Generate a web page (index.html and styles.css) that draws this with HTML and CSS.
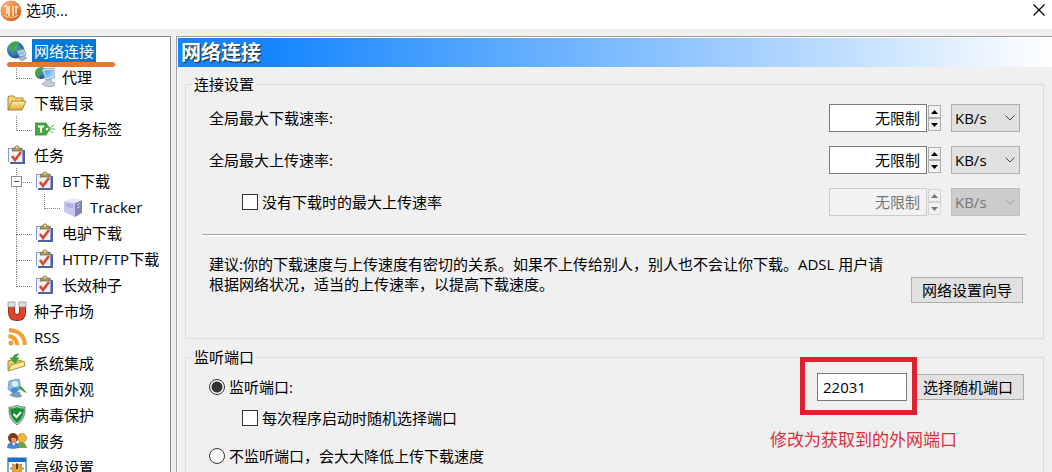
FILE: index.html
```html
<!DOCTYPE html>
<html lang="zh-CN">
<head>
  <meta charset="UTF-8">
  <meta name="viewport" content="width=device-width,initial-scale=1.0">
  <title>选项</title>
  <link rel="stylesheet" href="styles.css">
</head>
<body>
  <svg class="defs" aria-hidden="true">
    <defs>
      <linearGradient id="orange" x1="0" y1="0" x2="1" y2="1">
        <stop offset="0" stop-color="#ffc48a"/><stop offset="0.5" stop-color="#ee8838"/><stop offset="1" stop-color="#c9501a"/>
      </linearGradient>
      <radialGradient id="globe" cx="0.35" cy="0.3" r="0.8">
        <stop offset="0" stop-color="#5fb4ee"/><stop offset="1" stop-color="#0b3f94"/>
      </radialGradient>
      <linearGradient id="folder" x1="0" y1="0" x2="0" y2="1">
        <stop offset="0" stop-color="#fdf0a4"/><stop offset="1" stop-color="#dfa93a"/>
      </linearGradient>
      <linearGradient id="screen" x1="0" y1="0" x2="1" y2="1">
        <stop offset="0" stop-color="#3e9df0"/><stop offset="1" stop-color="#b4e4ff"/>
      </linearGradient>
      <symbol id="i-task" viewBox="0 0 20 20">
        <path d="M3 5h15v14H3z" fill="#4a65a6"/>
        <path d="M1 3h15v14H1z" fill="#8c9cc6"/>
        <path d="M2 4h13v13H2z" fill="#f2f3fb"/>
        <path d="M5 6l1-3h2l1-2h2l1 2h2l1 3z" fill="#b39b55" stroke="#6b5d35" stroke-width="0.7"/>
        <circle cx="10" cy="2.5" r="1" fill="#fff3bb"/>
        <path d="M5 11l3 4 6-8" fill="none" stroke="#d8492e" stroke-width="2.6"/>
      </symbol>
    </defs>
  </svg>

  <header class="titlebar">
    <svg class="logo" viewBox="0 0 22 22">
      <circle cx="11" cy="11" r="10" fill="url(#orange)" stroke="#d07a40" stroke-width="0.8"/>
      <path d="M4 7q3-3 3 1v6M9 16V6M13 16V6M16 14V8q0-3 2 0" fill="none" stroke="#ffe3c2" stroke-width="1.8"/>
      <path d="M4 15q7 5 14 0" fill="none" stroke="#ffc080" stroke-width="1.4"/>
    </svg>
    <span class="title">选项...</span>
    <button class="close" type="button" aria-label="关闭">
      <svg viewBox="0 0 12 12"><path d="M0.5 0.5l11 11M11.5 0.5l-11 11" stroke="#000" stroke-width="1.2"/></svg>
    </button>
  </header>

  <div class="body">
    <nav class="sidebar">
      <ul class="tree">
        <li>
          <a href="#" class="node selected">
            <svg viewBox="0 0 20 20">
              <circle cx="8.5" cy="9" r="8.5" fill="url(#globe)"/>
              <path d="M2 5q5-6 9-4l1 4-4 1-1 4-3 1zM9 9l5-2 2 5-4 4-2-3zM4 12l3 1 1 3z" fill="#43a83c"/>
              <path d="M10 10l7-2 2 6-6 2z" fill="#d6dde8" stroke="#6f7f96" stroke-width="0.7"/>
              <path d="M11.5 11l5-1.5 1 3.5-4 1.500z" fill="#84c1f4"/>
              <path d="M11 17l6-2 3 2-5 3z" fill="#b2bccb" stroke="#6f7f96" stroke-width="0.5"/>
            </svg>
            <span>网络连接</span>
          </a>
          <ul>
            <li>
              <a href="#" class="node">
                <svg viewBox="0 0 20 20">
                  <circle cx="6" cy="6" r="6" fill="url(#globe)"/>
                  <path d="M1 4q3-4 6-3l1 3-3 3-1 4-3-3z" fill="#43a83c"/>
                  <path d="M7 2l12-1 0.5 10-9 2z" fill="#e2e8f0" stroke="#8090a8" stroke-width="0.7"/>
                  <path d="M9 3.5l9-1v7.5l-7 1.5z" fill="url(#screen)"/>
                  <path d="M12 13l4-1 1 3 3 1-1 3-7 1-5-3z" fill="#c5cbd9" stroke="#8792a8" stroke-width="0.6"/>
                </svg>
                <span>代理</span>
              </a>
            </li>
          </ul>
        </li>
        <li>
          <a href="#" class="node">
            <svg viewBox="0 0 20 20">
              <path d="M1 17V4l1-1h5l1 2h8v3" fill="#f2d67a" stroke="#9b7a2a" stroke-width="0.9"/>
              <path d="M1 17l4-9h14l-4 9z" fill="url(#folder)" stroke="#9b7a2a" stroke-width="0.9"/>
            </svg>
            <span>下载目录</span>
          </a>
          <ul>
            <li>
              <a href="#" class="node">
                <svg viewBox="0 0 20 20">
                  <path d="M0 4h11l4 6-4 6H0z" fill="#46a845" stroke="#2f8a34" stroke-width="0.8"/>
                  <path d="M3 7.500h6M6 7.500v6" stroke="#fff" stroke-width="2"/>
                  <circle cx="12" cy="10" r="1.2" fill="#fff"/>
                  <path d="M13 10l6-4M14 10h6M13 10l5 4" fill="none" stroke="#63ad5f" stroke-width="1"/>
                </svg>
                <span>任务标签</span>
              </a>
            </li>
          </ul>
        </li>
        <li>
          <a href="#" class="node"><svg><use href="#i-task"/></svg><span>任务</span></a>
          <ul>
            <li>
              <button class="toggle" type="button" aria-label="折叠"></button>
              <a href="#" class="node"><svg><use href="#i-task"/></svg><span>BT下载</span></a>
              <ul>
                <li>
                  <a href="#" class="node">
                    <svg viewBox="0 0 20 20">
                      <path d="M1 4l11 2v14L1 15z" fill="#c9c8ea"/>
                      <path d="M12 6l7-3v13l-7 4z" fill="#8683bb"/>
                      <path d="M1 4l10-3 8 2-7 3z" fill="#e7e7f8"/>
                      <path d="M3 7l7 1.5M3 9l7 1.5" stroke="#8c8bc4" stroke-width="0.8"/>
                      <path d="M14 8l3-1.5M14 11l3-1.5" stroke="#d5d4f2" stroke-width="1"/>
                    </svg>
                    <span>Tracker</span>
                  </a>
                </li>
              </ul>
            </li>
            <li><a href="#" class="node"><svg><use href="#i-task"/></svg><span>电驴下载</span></a></li>
            <li><a href="#" class="node"><svg><use href="#i-task"/></svg><span>HTTP/FTP下载</span></a></li>
            <li><a href="#" class="node"><svg><use href="#i-task"/></svg><span>长效种子</span></a></li>
          </ul>
        </li>
        <li>
          <a href="#" class="node">
            <svg viewBox="0 0 20 20">
              <path d="M4.500 1v10q0 5.5 5.5 5.5t5.5-5.500V1" fill="none" stroke="#8f1f12" stroke-width="7"/>
              <path d="M4.500 1v10q0 5.5 5.5 5.5t5.5-5.500V1" fill="none" stroke="#dd4526" stroke-width="5.5"/>
              <path d="M1 1h7v5H1zM12 1h7v5h-7z" fill="#dcdfe3" stroke="#8a8a8a" stroke-width="0.7"/>
            </svg>
            <span>种子市场</span>
          </a>
        </li>
        <li>
          <a href="#" class="node">
            <svg viewBox="0 0 20 20">
              <circle cx="4" cy="16" r="2.5" fill="#efa035"/>
              <path d="M1.500 9q8 1 9 9M2 3Q17 4 18 18" fill="none" stroke="#efa035" stroke-width="4"/>
            </svg>
            <span>RSS</span>
          </a>
        </li>
        <li>
          <a href="#" class="node">
            <svg viewBox="0 0 20 20">
              <path d="M1 18V8l4-1 2 2 7-2 1 3" fill="#e6ce6c" stroke="#94762c" stroke-width="0.8"/>
              <path d="M1 18l3-6 13-4 1 5z" fill="#fbe992" stroke="#94762c" stroke-width="0.8"/>
              <path d="M12 1Q6 1 6 5H3l5 5 4-5H9q0-2 3-4z" fill="#3aa63c" stroke="#247a2a" stroke-width="0.5"/>
            </svg>
            <span>系统集成</span>
          </a>
        </li>
        <li>
          <a href="#" class="node">
            <svg viewBox="0 0 20 20">
              <path d="M2 16q4-2 4-4l7 1q0 3 3 4-6 4-14-1z" fill="#7f9cb8"/>
              <path d="M2 2l10-2 2 10-8 4-5-4z" fill="#8fc2ee" stroke="#6888aa" stroke-width="0.8"/>
              <circle cx="8" cy="5" r="3" fill="#d9efff"/>
              <path d="M3 11q4-5 9-2l-2 4-4 1z" fill="#4a8fd2"/>
              <path d="M11 7l4 1 5 6-3-1-4-3z" fill="#499b3b"/>
            </svg>
            <span>界面外观</span>
          </a>
        </li>
        <li>
          <a href="#" class="node">
            <svg viewBox="0 0 20 20">
              <path d="M10 0q4 3 8 2 1 12-8 18Q1 14 2 2q4 1 8-2z" fill="#bfc6c4" stroke="#68716e" stroke-width="0.9"/>
              <path d="M10 2q3 2 7 1.500 0 9-7 14.500-7-5.500-7-14.500Q7 4 10 2z" fill="#159035"/>
              <path d="M6.500 9l3 3L14 7" fill="none" stroke="#fff" stroke-width="2"/>
            </svg>
            <span>病毒保护</span>
          </a>
        </li>
        <li>
          <a href="#" class="node">
            <svg viewBox="0 0 20 20">
              <path d="M9 17q0-6 5-6t6 6z" fill="#6fa544"/>
              <circle cx="15" cy="7" r="4.5" fill="#e9b73a" stroke="#9b7425" stroke-width="0.6"/>
              <path d="M0 17q0-6 6-6t6 6l-6 1z" fill="#4d83d6"/>
              <circle cx="6" cy="7" r="5" fill="#7a3a22"/>
              <path d="M4 7h5q1 5-2 5T4 7z" fill="#e8955b"/>
              <path d="M5 12l2 3 1-3z" fill="#fff"/>
            </svg>
            <span>服务</span>
          </a>
        </li>
        <li>
          <a href="#" class="node">
            <svg viewBox="0 0 20 20">
              <path d="M1 1h18v19H1z" fill="#fff" stroke="#1c70c4" stroke-width="1.2"/>
              <path d="M1 1h18v4H1z" fill="#1c70c4"/>
              <path d="M10 6l1.500 2 3-1-0.500 3 3 1.500-3 1.500 1 3-3-0.500-2 2.500-2-2.500-3 0.500 1-3-3-1.500 3-1.500L5.500 7l3 1z" fill="#e6a42c" stroke="#8d5c17" stroke-width="0.6"/>
              <path d="M10 7v5" stroke="#222" stroke-width="1.5"/>
            </svg>
            <span>高级设置</span>
          </a>
        </li>
      </ul>
      <div class="underline-mark"></div>
    </nav>

    <main class="page">
      <h1>网络连接</h1>
      <form class="groups">
        <fieldset>
          <legend>连接设置</legend>
          <div class="row rate">
            <label class="grow" for="downRate">全局最大下载速率:</label>
            <input class="box num" type="text" id="downRate" value="无限制">
            <span class="spin">
              <button type="button" aria-label="增加"><svg viewBox="0 0 7 4"><path d="M0 4h7L3.500 0z"/></svg></button>
              <button type="button" aria-label="减少"><svg viewBox="0 0 7 4"><path d="M0 0h7L3.500 4z"/></svg></button>
            </span>
            <span class="unit">
              <select aria-label="下载速率单位"><option>KB/s</option></select>
              <svg viewBox="0 0 10 6"><path d="M0.500 0.500L5 5l4.500-4.500"/></svg>
            </span>
          </div>
          <div class="row rate">
            <label class="grow" for="upRate">全局最大上传速率:</label>
            <input class="box num" type="text" id="upRate" value="无限制">
            <span class="spin">
              <button type="button" aria-label="增加"><svg viewBox="0 0 7 4"><path d="M0 4h7L3.500 0z"/></svg></button>
              <button type="button" aria-label="减少"><svg viewBox="0 0 7 4"><path d="M0 0h7L3.500 4z"/></svg></button>
            </span>
            <span class="unit">
              <select aria-label="上传速率单位"><option>KB/s</option></select>
              <svg viewBox="0 0 10 6"><path d="M0.500 0.500L5 5l4.500-4.500"/></svg>
            </span>
          </div>
          <div class="row rate">
            <label class="grow check indent"><input type="checkbox" id="idle">没有下载时的最大上传速率</label>
            <input class="box num" type="text" id="idleRate" value="无限制" aria-label="最大上传速率" disabled>
            <span class="spin">
              <button type="button" aria-label="增加" disabled><svg viewBox="0 0 7 4"><path d="M0 4h7L3.500 0z"/></svg></button>
              <button type="button" aria-label="减少" disabled><svg viewBox="0 0 7 4"><path d="M0 0h7L3.500 4z"/></svg></button>
            </span>
            <span class="unit">
              <select aria-label="上传速率单位" disabled><option>KB/s</option></select>
              <svg viewBox="0 0 10 6"><path d="M0.500 0.500L5 5l4.500-4.500"/></svg>
            </span>
          </div>
          <hr>
          <div class="advice">
            <p>建议:你的下载速度与上传速度有密切的关系。如果不上传给别人，别人也不会让你下载。ADSL 用户请根据网络状况，适当的上传速率，以提高下载速度。</p>
            <button class="btn" type="button">网络设置向导</button>
          </div>
        </fieldset>

        <fieldset>
          <legend>监听端口</legend>
          <div class="row port">
            <label class="grow check"><input type="radio" name="listen" checked>监听端口:</label>
            <span class="port-box">
              <input class="box" type="text" id="port" value="22031" aria-label="端口">
              <span class="red-frame"></span>
              <span class="red-note">修改为获取到的外网端口</span>
            </span>
            <button class="btn" type="button">选择随机端口</button>
          </div>
          <div class="row">
            <label class="check indent"><input type="checkbox" id="random">每次程序启动时随机选择端口</label>
          </div>
          <div class="row last">
            <label class="check"><input type="radio" name="listen">不监听端口，会大大降低上传下载速度</label>
          </div>
        </fieldset>
      </form>
    </main>
  </div>
</body>
</html>
```

FILE: styles.css
```css
*
{
  box-sizing:border-box;
}
body
{
  display:flex;
  flex-direction:column;
  height:100vh;
  margin:0;
  overflow:hidden;
  background-color:#f0f0f0;
  color:#000;
  font-family:"Open Sans","Noto Sans CJK SC",sans-serif;
  font-size:15px;
  line-height:20px;
}
input,select,button
{
  margin:0;
  font:inherit;
  color:inherit;
}
.defs
{
  position:absolute;
  width:0;
  height:0;
}

/* title bar */
.titlebar
{
  display:flex;
  flex:none;
  align-items:flex-start;
  height:29px;
  background-color:#fff;
}
.logo
{
  width:22px;
  height:22px;
  margin-right:4px;
}
.title
{
  flex:1;
}
.close
{
  padding:4px 7px;
  border:none;
  background:none;
  line-height:0;
}
.close svg
{
  width:12px;
  height:12px;
}

.body
{
  display:flex;
  flex:1;
  gap:5px;
  min-height:0;
  padding-top:7px;
}

/* left tree */
.sidebar
{
  position:relative;
  flex:none;
  width:171px;
  padding:1px 0 0 7px;
  overflow:hidden;
  border-top:1px solid #828790;
  border-right:1px solid #828790;
  background-color:#fff;
}
.tree,.tree ul
{
  margin:0;
  padding:0;
  list-style:none;
}
.tree ul
{
  padding-left:28px;
}
.tree li
{
  position:relative;
}
.node
{
  display:flex;
  align-items:center;
  gap:5px;
  height:26px;
  color:#000;
  text-decoration:none;
  white-space:nowrap;
}
.node svg
{
  flex:none;
  width:20px;
  height:20px;
}
.node span
{
  padding:0 2px;
  line-height:24px;
}
.node.selected span
{
  background-color:#0078d7;
  color:#fff;
}
.tree ul li::before
{
  content:"";
  position:absolute;
  top:0;
  left:-19px;
  width:15px;
  height:14px;
  border-left:1px dotted #808080;
  border-bottom:1px dotted #808080;
}
.tree ul li:not(:last-child)::after
{
  content:"";
  position:absolute;
  top:14px;
  bottom:0;
  left:-19px;
  border-left:1px dotted #808080;
}
.toggle
{
  position:absolute;
  z-index:1;
  top:8px;
  left:-24px;
  width:11px;
  height:11px;
  padding:0 2px;
  border:1px solid #919191;
  background:linear-gradient(#3b4f81,#3b4f81) center/5px 1px no-repeat #fff;
}
.underline-mark
{
  position:absolute;
  top:25px;
  left:7px;
  width:108px;
  height:5px;
  border-radius:3px;
  background-color:#e8762c;
}

/* right page */
.page
{
  flex:1;
  min-width:0;
  padding:1px 0 0 1px;
  overflow:hidden;
  border-top:1px solid #a0a0a0;
  border-left:1px solid #a0a0a0;
  box-shadow:inset 1px 1px #fff;
}
h1
{
  margin:0;
  padding-left:3px;
  background:linear-gradient(90deg,#1485ff 10%,#fff);
  color:#fff;
  font-size:20px;
  line-height:29px;
  text-shadow:1px 1px 1px #222;
}
.groups
{
  padding:7px 8px 0 7px;
}
fieldset
{
  min-width:0;
  margin:0 0 8px;
  padding:0 17px 0 16px;
  border:1px solid #dcdcdc;
}
fieldset:first-child
{
  padding-top:3px;
  padding-bottom:35px;
}
legend
{
  margin-left:-10px;
  padding:0 2px;
}
.row
{
  display:flex;
  align-items:center;
  padding-left:7px;
}
.rate
{
  height:42px;
  padding-right:6px;
}
.grow
{
  flex:1;
}
.box
{
  height:28px;
  padding:0 5px;
  border:1px solid #7a7a7a;
  background-color:#fff;
}
.num
{
  width:98px;
  padding:0 6px 2px;
  text-align:right;
}
.box:disabled
{
  border-color:#ccc;
  background-color:#f2f2f2;
  color:#777;
}
.spin
{
  display:flex;
  flex-direction:column;
  width:13px;
  margin:0 10px 0 1px;
}
.spin button
{
  display:flex;
  align-items:center;
  justify-content:center;
  height:13px;
  padding:0;
  border:1px solid #adadad;
  background-color:#f0f0f0;
}
.spin svg
{
  width:7px;
  height:4px;
}
.spin button:disabled
{
  border-color:#d4d4d4;
  fill:#777;
}
.unit
{
  position:relative;
}
.unit select
{
  display:block;
  width:69px;
  height:28px;
  padding:0 3px;
  appearance:none;
  border:1px solid #adadad;
  border-radius:0;
  background-color:#e1e1e1;
  opacity:1;
}
.unit svg
{
  position:absolute;
  top:11px;
  right:5px;
  width:10px;
  height:6px;
  fill:none;
  stroke:#444;
  pointer-events:none;
}
.unit select:disabled
{
  border-color:#bfbfbf;
  background-color:#ccc;
  color:#777;
}
.unit select:disabled + svg
{
  stroke:#a0a0a0;
}
.check
{
  display:flex;
  align-items:center;
  gap:4px;
}
.indent
{
  padding-left:33px;
}
input[type="checkbox"],input[type="radio"]
{
  flex:none;
  width:16px;
  height:16px;
  appearance:none;
  border:1px solid #333;
  background-color:#fff;
}
input[type="radio"]
{
  border-radius:50%;
}
input[type="radio"]:checked
{
  background:radial-gradient(circle,#333 5px,#fff 6px);
}
hr
{
  margin:11px 0 18px;
  border:none;
  border-top:1px solid #a0a0a0;
  border-bottom:1px solid #fff;
}
.advice
{
  display:flex;
  align-items:flex-end;
  justify-content:space-between;
  padding:0 3px 0 7px;
}
.advice p
{
  flex:1;
  max-width:684px;
  margin:0 0 9px;
}
.btn
{
  height:26px;
  padding:0 10px;
  border:1px solid #adadad;
  background-color:#e1e1e1;
  line-height:20px;
}
.port
{
  height:40px;
  padding-right:2px;
}
.port-box
{
  position:relative;
  margin-right:5px;
}
.port-box .box
{
  display:block;
  width:90px;
}
.red-frame
{
  position:absolute;
  top:-16px;
  left:-17px;
  width:117px;
  height:58px;
  border:5px solid #e0202c;
  pointer-events:none;
}
.red-note
{
  position:absolute;
  top:57px;
  left:-47px;
  color:#dc2f3e;
  font-size:17px;
  white-space:nowrap;
}
.port + .row
{
  height:22px;
}
.last
{
  height:54px;
}
```
